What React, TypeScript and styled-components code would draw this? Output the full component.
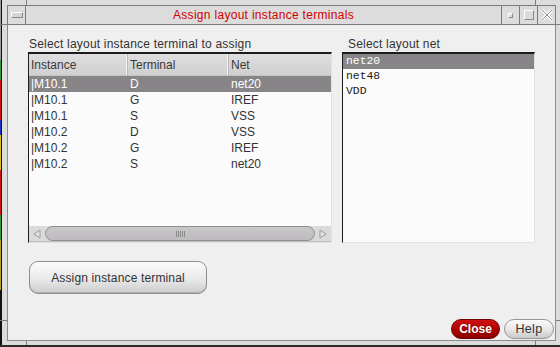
import React from "react"
import styled, { createGlobalStyle } from "styled-components"

const GlobalStyle = createGlobalStyle`
  html, body {
    margin: 0;
    padding: 0;
    background: #dcdcdc;
  }
  body {
    font-family: "Liberation Sans", Arial, sans-serif;
  }
`

const FRAME = "#7c7c7c"

const line = (x: number, y: number, w: number | string, h: number | string, c = FRAME) =>
  `linear-gradient(${c}, ${c}) ${x}px ${y}px / ${typeof w === "number" ? w + "px" : w} ${
    typeof h === "number" ? h + "px" : h
  } no-repeat`

const Desktop = styled.div`
  width: 560px;
  height: 347px;
  box-sizing: border-box;
  padding: 5px 4px 6px 7px;
  overflow: hidden;
  background: ${line(26, 0, 1, 5)}, ${line(535, 0, 1, 5)}, ${line(0, 24, 7, 1)},
    ${line(555, 24, 5, 1)}, ${line(0, 320, 7, 1)}, ${line(555, 320, 5, 1)},
    ${line(26, 341, 1, 4)}, ${line(535, 341, 1, 4)}, ${line(0, 345, "100%", 2, "#2a2a2a")},
    ${line(1, 0, 1, "100%", "#111")},
    linear-gradient(
        #9a9a9a 0 60px,
        #2c9a3c 60px 80px,
        #d01010 80px 120px,
        #1a30c0 120px 135px,
        #d8c020 135px 170px,
        #d01010 170px 215px,
        #2c9a3c 215px 240px,
        #b8a020 240px 290px,
        #111 290px
      )
      0 0 / 1px 100% no-repeat,
    #dcdcdc;
`

const Window = styled.div`
  width: 549px;
  height: 336px;
  display: flex;
  flex-direction: column;
`

const TitleBar = styled.div`
  height: 20px;
  box-sizing: border-box;
  border: 1px solid ${FRAME};
  display: grid;
  grid-template-columns: 18px 1fr 18px 18px 18px;
  background: #dcdcdc;
`

const TitleButton = styled.div<{ $left?: boolean }>`
  display: flex;
  align-items: center;
  justify-content: center;
  ${({ $left }) => ($left ? `border-right: 1px solid ${FRAME};` : `border-left: 1px solid ${FRAME};`)}
`

const MenuBar = styled.div`
  width: 10px;
  height: 4px;
  border: 1px solid #8a8a8a;
  border-top-color: #fff;
  border-left-color: #fff;
  background: #d4d4d4;
`

const MiniBox = styled.div`
  width: 3px;
  height: 3px;
  border: 1px solid #8a8a8a;
  border-top-color: #fff;
  border-left-color: #fff;
`

const MaxBox = styled.div`
  width: 8px;
  height: 8px;
  border: 1px solid #8a8a8a;
  border-top-color: #fff;
  border-left-color: #fff;
`

const TitleText = styled.div`
  display: flex;
  align-items: center;
  justify-content: center;
  color: #d00000;
  font-size: 12px;
  letter-spacing: 0.3px;
`

const Body = styled.div`
  flex: 1;
  display: flex;
  flex-direction: column;
  background: #efefef;
  border: 1px solid #8c8c8c;
  border-top: none;
  padding: 12px 1px 1px 20px;
`

const Columns = styled.div`
  display: grid;
  grid-template-columns: 304px 193px;
  column-gap: 10px;
`

const Panel = styled.div`
  display: flex;
  flex-direction: column;
`

const Label = styled.div<{ $indent?: number }>`
  height: 15px;
  line-height: 15px;
  font-size: 12px;
  letter-spacing: 0.2px;
  color: #333;
  padding-left: ${({ $indent }) => $indent ?? 1}px;
`

const Box = styled.div`
  height: 191px;
  box-sizing: border-box;
  border-top: 2px solid #1c1c1c;
  border-left: 1px solid #1c1c1c;
  border-right: 1px solid #e2e2e2;
  border-bottom: 1px solid #e2e2e2;
  background: #fbfbfb;
  display: flex;
  flex-direction: column;
  overflow: hidden;
`

const COLS = "99px 101px 1fr"

const HeaderRow = styled.div`
  display: grid;
  grid-template-columns: ${COLS};
  height: 21px;
  background: linear-gradient(#dedede, #d0d0d0);
  border-bottom: 1px solid #c4c4c4;
`

const HeaderCell = styled.div`
  display: flex;
  align-items: center;
  padding-left: 2px;
  font-size: 12px;
  color: #3a3a3a;
  border-right: 1px solid #b8b8b8;
  box-shadow: inset -1px 0 0 #f4f4f4;
  &:last-child {
    border-right: none;
    box-shadow: none;
  }
`

const Rows = styled.div`
  flex: 1;
`

const Row = styled.div<{ $selected?: boolean }>`
  display: grid;
  grid-template-columns: ${COLS};
  height: 16px;
  line-height: 16px;
  font-size: 12px;
  background: ${({ $selected }) => ($selected ? "#878587" : "transparent")};
  color: ${({ $selected }) => ($selected ? "#fff" : "#333")};
`

const Cell = styled.div`
  padding-left: 2px;
  white-space: nowrap;
`

const ScrollBar = styled.div`
  height: 16px;
  display: grid;
  grid-template-columns: 16px 1fr 16px;
  background: #dcdcdc;
  border-bottom: 1px solid #bdbdbd;
  box-sizing: border-box;
`

const Arrow = styled.div`
  display: flex;
  align-items: center;
  justify-content: center;
  background: #dadada;
`

const Thumb = styled.div`
  border: 1px solid #8e8e8e;
  border-radius: 8px;
  background: linear-gradient(#c9c7c9, #bdbbbd);
  display: flex;
  align-items: center;
  justify-content: center;
`

const Grip = styled.div`
  width: 9px;
  height: 6px;
  background: repeating-linear-gradient(90deg, #8a8a8a 0 1px, transparent 1px 2px);
`

const NetItem = styled.div<{ $selected?: boolean }>`
  height: 15px;
  line-height: 15px;
  padding-left: 3px;
  font-family: "Liberation Mono", "Courier New", monospace;
  font-size: 11.4px;
  background: ${({ $selected }) => ($selected ? "#878587" : "transparent")};
  color: ${({ $selected }) => ($selected ? "#fff" : "#1c1c1c")};
`

const AssignButton = styled.button`
  margin: 18px 0 0 1px;
  width: 178px;
  height: 33px;
  border: 1px solid #8f8f8f;
  border-radius: 9px;
  background: linear-gradient(#fbfbfb 0%, #e9e9e9 55%, #cdcdcd 100%);
  box-shadow: inset 0 -1px 0 #b0b0b0;
  font-family: "Liberation Sans", Arial, sans-serif;
  font-size: 12px;
  letter-spacing: 0.15px;
  color: #333;
  padding: 0;
`

const Footer = styled.div`
  margin-top: auto;
  display: flex;
  justify-content: flex-end;
  gap: 4px;
`

const FooterButton = styled.button<{ $danger?: boolean }>`
  height: 20px;
  width: ${({ $danger }) => ($danger ? 49 : 50)}px;
  padding: 0;
  border-radius: 10px;
  font-family: "Liberation Sans", Arial, sans-serif;
  font-size: ${({ $danger }) => ($danger ? 12 : 12.5)}px;
  font-weight: ${({ $danger }) => ($danger ? 700 : 400)};
  letter-spacing: ${({ $danger }) => ($danger ? 0 : 0.3)}px;
  border: 1px solid ${({ $danger }) => ($danger ? "#6e0000" : "#969696")};
  background: ${({ $danger }) =>
    $danger ? "linear-gradient(#d21010, #a80000 60%, #8c0000)" : "linear-gradient(#fbfbfb, #e6e6e6 55%, #cacaca)"};
  color: ${({ $danger }) => ($danger ? "#fff" : "#333")};
  text-shadow: ${({ $danger }) => ($danger ? "0 0 1px #500" : "none")};
`

const rows = [
  ["|M10.1", "D", "net20"],
  ["|M10.1", "G", "IREF"],
  ["|M10.1", "S", "VSS"],
  ["|M10.2", "D", "VSS"],
  ["|M10.2", "G", "IREF"],
  ["|M10.2", "S", "net20"],
]

const nets = ["net20", "net48", "VDD"]

const CloseIcon = () => (
  <svg width="12" height="12" viewBox="0 0 12 12">
    <path d="M1 1 L11 11 M11 1 L1 11" stroke="#fff" strokeWidth="3" />
    <path d="M1 1 L11 11 M11 1 L1 11" stroke="#8a8a8a" strokeWidth="1" />
  </svg>
)

const ArrowIcon = ({ dir }: { dir: "left" | "right" }) => (
  <svg width="8" height="10" viewBox="0 0 8 10">
    <path
      d={dir === "left" ? "M7 1 L1 5 L7 9 Z" : "M1 1 L7 5 L1 9 Z"}
      fill="#e4e4e4"
      stroke="#9a9a9a"
      strokeWidth="1"
    />
  </svg>
)

export default function App() {
  return (
    <>
      <GlobalStyle />
      <Desktop>
        <Window>
          <TitleBar>
            <TitleButton $left>
              <MenuBar />
            </TitleButton>
            <TitleText>Assign layout instance terminals</TitleText>
            <TitleButton>
              <MiniBox />
            </TitleButton>
            <TitleButton>
              <MaxBox />
            </TitleButton>
            <TitleButton>
              <CloseIcon />
            </TitleButton>
          </TitleBar>

          <Body>
            <Columns>
              <Panel>
                <Label>Select layout instance terminal to assign</Label>
                <Box>
                  <HeaderRow>
                    <HeaderCell>Instance</HeaderCell>
                    <HeaderCell>Terminal</HeaderCell>
                    <HeaderCell>Net</HeaderCell>
                  </HeaderRow>
                  <Rows>
                    {rows.map((r, i) => (
                      <Row key={i} $selected={i === 0}>
                        {r.map((c, j) => (
                          <Cell key={j}>{c}</Cell>
                        ))}
                      </Row>
                    ))}
                  </Rows>
                  <ScrollBar>
                    <Arrow>
                      <ArrowIcon dir="left" />
                    </Arrow>
                    <Thumb>
                      <Grip />
                    </Thumb>
                    <Arrow>
                      <ArrowIcon dir="right" />
                    </Arrow>
                  </ScrollBar>
                </Box>
              </Panel>

              <Panel>
                <Label $indent={6}>Select layout net</Label>
                <Box>
                  {nets.map((n, i) => (
                    <NetItem key={n} $selected={i === 0}>
                      {n}
                    </NetItem>
                  ))}
                </Box>
              </Panel>
            </Columns>

            <div>
              <AssignButton>Assign instance terminal</AssignButton>
            </div>

            <Footer>
              <FooterButton $danger>Close</FooterButton>
              <FooterButton>Help</FooterButton>
            </Footer>
          </Body>
        </Window>
      </Desktop>
    </>
  )
}
